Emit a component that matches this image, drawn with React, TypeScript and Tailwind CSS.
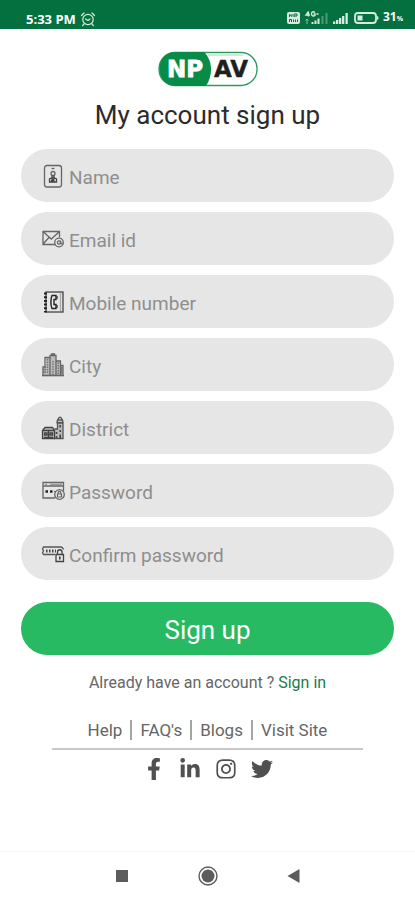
import type { ReactNode } from "react"
import { FaFacebookF, FaInstagram, FaLinkedinIn, FaTwitter } from "react-icons/fa"

function StatusBar() {
  return (
    <header className="flex h-[29px] items-end justify-between bg-[#04703f] pr-3 pl-[26px] pb-[2px] text-white">
      <div className="flex items-center gap-1">
        <span className="font-['Open_Sans',sans-serif] text-[13px] leading-4 font-bold">5:33 PM</span>
        <svg className="size-4" viewBox="0 0 16 16" fill="none" stroke="#d5ebdf" strokeWidth="1.2" strokeLinecap="round">
          <circle cx="8" cy="8.5" r="5.2" />
          <path d="M1.5 4.5 4 2M14.5 4.5 12 2M4 13l-1.3 1.5M12 13l1.3 1.5M5.5 8 8 9.5 10 8" />
        </svg>
      </div>
      <div className="flex items-center gap-1">
        <svg className="h-4 w-[92px]" viewBox="0 0 92 16" fill="#d5ebdf">
          <rect x="0" y="2" width="13" height="12" rx="2" />
          <path d="M2.5 7V4.5l2.5 2V4m2 0v3m0-3h3v2H7M2.5 12V9.5h2V12m2-2.5V12m2-2.5V12m2-2.5V12" fill="none" stroke="#04703f" strokeWidth="1" />
          <path d="M21.5 1.5 19 5h4M21.5 1.5v5M28 2.5c-2-1.5-3.5-.5-3.5 1.5s2 2.5 3.5 1.5V4h-1.5M29.5 4h2" fill="none" stroke="#d5ebdf" strokeWidth="1.4" />
          <path d="M20 9v5M18.5 10.5 20 9l1.5 1.5" fill="none" stroke="#8fbfa5" strokeWidth="1" />
          <path d="M24.5 12h2v2h-2zM27.5 10.5h2V14h-2zM30.5 8.5h2V14h-2z" />
          <path d="M34.5 6h2v8h-2zM38.5 3h2v11h-2z" opacity=".35" />
          <path d="M46 11.5h2.3V14H46zM49 10h2.3v4H49zM52 8h2.3v6H52zM55 6h2.3v8H55zM58.5 3h2.3v11h-2.3z" />
          <rect x="68" y="3" width="21" height="10" rx="3" fill="none" stroke="#d5ebdf" strokeWidth="1.8" />
          <rect x="70.5" y="5.5" width="5" height="5" />
          <path d="M90 6c2 .5 2 3.5 0 4z" />
        </svg>
        <span className="font-['Open_Sans',sans-serif] text-xs leading-4 font-bold">
          31<span className="text-[7px]">%</span>
        </span>
      </div>
    </header>
  )
}

function Logo() {
  return (
    <svg className="h-[36px] w-[100px]" viewBox="0 0 100 36" role="img" aria-label="NP AV">
      <rect x="1" y="1.5" width="98" height="33" rx="16" fill="#fff" stroke="#2c9a62" strokeWidth="1.3" />
      <path d="M17 1h29c9 9 9 23 2 34H17C-4 34-4 2 17 1z" fill="#078b47" />
      <path d="M50 4h35" stroke="#a5d6bb" strokeWidth="1" />
      <g fontFamily="'DejaVu Sans', sans-serif" fontSize="23" fontWeight="700">
        <text x="9" y="26" fill="#fff" stroke="#fff" strokeWidth=".8">NP</text>
        <text x="56" y="26" fill="#1f1f1f" stroke="#1f1f1f" strokeWidth=".4">AV</text>
      </g>
    </svg>
  )
}

function FieldIcon({ children }: { children: ReactNode }) {
  return (
    <svg className="size-6 shrink-0" viewBox="0 0 24 24" fill="none" stroke="#666" strokeWidth="1.3">
      {children}
    </svg>
  )
}

const fields = [
  {
    id: "name",
    type: "text",
    label: "Name",
    icon: (
      <>
        <rect x="3.5" y="1.5" width="17" height="21.5" rx="2.5" />
        <path d="M10.5 4.5h3" />
        <circle cx="12" cy="9.5" r="2" />
        <path d="M11 11.5v2h2v-2M8.5 18v-3l2-1 1.5 2 1.5-2 2 1v3zM10.5 18v-1.5h3" stroke="#444" />
      </>
    ),
  },
  {
    id: "email",
    type: "email",
    label: "Email id",
    icon: (
      <>
        <path d="M14 17.5H2v-13h16.5V10M2 4.5l8.3 7.5 8.2-7.5M2 17l6-6.5" />
        <circle cx="18" cy="15.5" r="4.3" />
        <circle cx="18" cy="15.5" r="1.6" />
        <path d="M19.6 13.8v2.5c.5 1 1.5.5 1.7-.5" />
      </>
    ),
  },
  {
    id: "mobile",
    type: "tel",
    label: "Mobile number",
    icon: (
      <>
        <rect x="5" y="2" width="17" height="20" stroke="#444" />
        <path d="M4.5 2.5v20" stroke="#222" strokeWidth="3" strokeDasharray="2 1.7" />
        <path d="M19.5 3v18" stroke="#aaa" />
        <path d="M11 5.5h4v4h-2v5h2v4h-4c-1.5-3-1.5-10 0-13z" stroke="#222" strokeWidth="1.4" />
        <path d="M16 6v3M16 15v3" stroke="#333" />
      </>
    ),
  },
  {
    id: "city",
    type: "text",
    label: "City",
    icon: (
      <>
        <path d="M2 14h3V4.5h4v-2h6V8h4.5v4.5H22V22H2z" fill="#bbb" stroke="none" />
        <path d="M1 22.5h22" strokeWidth="1.6" />
        <path d="M2 22v-8h3M4 14V4.5h5V22M9 5V2.5h6V22M10.5 2.5V1h3v1.5M15 8h4.5V22M19.5 12.5H22V22" />
        <path d="M6.5 6v15M12 8v14M17.3 9.5V21" stroke="#777" strokeWidth="1.5" strokeDasharray="1.5 1" />
        <path d="M2 16.5h3M2 19h3M20.5 14v7" stroke="#777" />
      </>
    ),
  },
  {
    id: "district",
    type: "text",
    label: "District",
    icon: (
      <>
        <path d="M1.5 14.5 4 12h7l2.5 1H16V7h6v15.5H1.5z" fill="#bbb" stroke="none" />
        <path d="M1.5 22.5v-8L4 11.5h7.5l2 3v8zM1.5 14.5h12" stroke="#444" />
        <path d="M13.5 13h3V7H22v15.5h-8.5M16 6.5l.5-2.5h5l.5 2.5zM17 4c.5-3.5 3.5-3.5 4 0M19 1.5v-1" stroke="#555" />
        <path d="M3.5 17H6v2H3.5zM9 17h2.5v2H9zM7.5 14.5v8M3 21.5h9" stroke="#444" />
        <path d="M19.2 9v2.5M19.2 14v2M15.5 16v2M15.5 20v2M19.2 18.5v4" stroke="#444" strokeWidth="1.6" />
      </>
    ),
  },
  {
    id: "password",
    type: "password",
    label: "Password",
    icon: (
      <>
        <path d="M14 19H2V3.5h20.5V12M2 7h20.5" />
        <path d="M4 5.3h2M9 5.3h12" stroke="#999" />
        <path d="M4.5 12.5H7M9 12.5h2.5" stroke="#222" strokeWidth="2.5" />
        <circle cx="18.5" cy="15.5" r="4.8" />
        <path d="M16.5 15h4v3h-4zM17.2 15v-1.5c0-1.5 2.6-1.5 2.6 0V15M13 12.5h2" strokeWidth="1.2" />
      </>
    ),
  },
  {
    id: "confirm",
    type: "password",
    label: "Confirm password",
    icon: (
      <>
        <path d="M14 12.5H2.5l-1-1.5 1-2-1-2 1-2H20c1.5 0 2 1 2.5 2.5" stroke="#555" />
        <path d="M5 9h10" stroke="#444" strokeWidth="3" strokeDasharray="1.5 1.5" />
        <path d="M15 12.5h7.5v7H15zM16.5 12.5V10c0-3 4.5-3 4.5 0v2.5" stroke="#444" />
        <path d="M18.8 14.5v3" stroke="#333" strokeWidth="1.5" />
      </>
    ),
  },
]

const links = ["Help", "FAQ's", "Blogs", "Visit Site"]

const socials = [
  { name: "Facebook", icon: FaFacebookF },
  { name: "LinkedIn", icon: FaLinkedinIn },
  { name: "Instagram", icon: FaInstagram },
  { name: "Twitter", icon: FaTwitter },
]

export default function App() {
  return (
    <div className="flex min-h-screen flex-col bg-white font-[Roboto,sans-serif]">
      <StatusBar />

      <main className="flex flex-1 flex-col items-center px-[21px] pt-[22px]">
        <Logo />
        <h1 className="mt-3 text-[26px] leading-8 text-[#2b2b2b]">My account sign up</h1>

        <form className="mt-[18px] flex w-full flex-col gap-[10px]">
          {fields.map((field) => (
            <label
              key={field.id}
              htmlFor={field.id}
              className="flex h-[53px] items-center gap-1 rounded-full bg-[#e6e6e6] px-5"
            >
              <FieldIcon>{field.icon}</FieldIcon>
              <input
                id={field.id}
                type={field.type}
                aria-label={field.label}
                placeholder={field.label}
                className="w-full min-w-0 bg-transparent pt-1 text-[19px] leading-6 text-[#333] outline-none placeholder:text-[#8e8e8e]"
              />
            </label>
          ))}
          <button
            type="button"
            className="mt-3 h-[53px] w-full rounded-full bg-[#27ba62] pt-[2px] text-[26px] leading-8 text-white"
          >
            Sign up
          </button>
        </form>

        <p className="mt-4 text-base leading-6 text-[#666]">
          Already have an account ?{" "}
          <a href="#signin" className="text-[#1b7a4d]">Sign in</a>
        </p>

        {/* Footer links */}
        <nav className="mt-[25px] flex items-center text-[17px] leading-5 text-[#666]">
          {links.map((link, i) => (
            <a key={link} href="#" className={i > 0 ? "ml-2 border-l-2 border-[#a5a5a5] pl-2" : ""}>
              {link}
            </a>
          ))}
        </nav>
        <hr className="mt-2 w-5/6 border-t-2 border-[#c9c9c9]" />

        <div className="mt-2 flex items-center gap-[14px]">
          {socials.map((social) => (
            <a key={social.name} href="#" aria-label={social.name} className="text-[#505050]">
              <social.icon className="size-[22px]" />
            </a>
          ))}
        </div>
      </main>

      {/* System navigation */}
      <footer className="flex h-[49px] items-center justify-center gap-[62px] border-t border-[#f5f5f5]">
        <button type="button" aria-label="Recent apps">
          <svg className="size-6" viewBox="0 0 24 24" fill="#5c5c5c">
            <rect x="6" y="6" width="12" height="12" />
          </svg>
        </button>
        <button type="button" aria-label="Home">
          <svg className="size-6" viewBox="0 0 24 24" fill="#5c5c5c">
            <circle cx="12" cy="12" r="9" fill="none" stroke="#5c5c5c" strokeWidth="1.4" />
            <circle cx="12" cy="12" r="6.5" />
          </svg>
        </button>
        <button type="button" aria-label="Back">
          <svg className="size-6" viewBox="0 0 24 24" fill="#5c5c5c">
            <path d="M5.5 12 17.5 5v14z" />
          </svg>
        </button>
      </footer>
    </div>
  )
}
